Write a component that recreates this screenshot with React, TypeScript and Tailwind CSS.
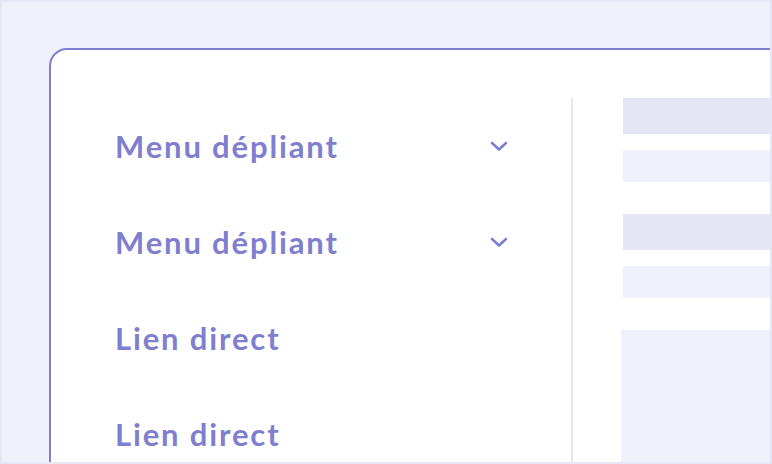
const font = { fontFamily: "Lato, 'Open Sans', sans-serif" };

function Chevron() {
  return (
    <svg width="18" height="12" viewBox="0 0 18 12" fill="none">
      <path d="M2 3l7 6.5L16 3" stroke="#7f7fcf" strokeWidth="2.6" strokeLinecap="round" strokeLinejoin="round" />
    </svg>
  );
}

function NavItem({ label, dropdown }: { label: string; dropdown?: boolean }) {
  return (
    <div className="h-[96px] flex items-center justify-between">
      <span className="text-[31px] font-bold text-[#7f7fcf] tracking-[1.85px]">{label}</span>
      {dropdown && <Chevron />}
    </div>
  );
}

export default function App() {
  return (
    <div
      className="w-[772px] h-[464px] border-2 border-[#e6e6f5] bg-[#f0f0fa] overflow-hidden pl-[47px] pt-[46px]"
      style={font}
    >
      <div className="w-[800px] h-[500px] bg-white border-2 border-[#7f7fcf] rounded-tl-[18px] flex pt-[48px]">
        <div className="w-[522px] shrink-0 pl-[64px] pr-[63px] border-r-2 border-[#e6e6ec]">
          <NavItem label="Menu dépliant" dropdown />
          <NavItem label="Menu dépliant" dropdown />
          <NavItem label="Lien direct" />
          <NavItem label="Lien direct" />
        </div>
        <div className="flex-1 flex flex-col pl-[50px]">
          <div className="h-[36px] bg-[#e5e5f5]" />
          <div className="h-[32px] mt-[16px] bg-[#f0f0fa]" />
          <div className="h-[36px] mt-[32px] bg-[#e5e5f5]" />
          <div className="h-[32px] mt-[16px] bg-[#f0f0fa]" />
          <div className="flex-1 mt-[32px] -ml-[2px] bg-[#f0f0fa]" />
        </div>
      </div>
    </div>
  );
}
